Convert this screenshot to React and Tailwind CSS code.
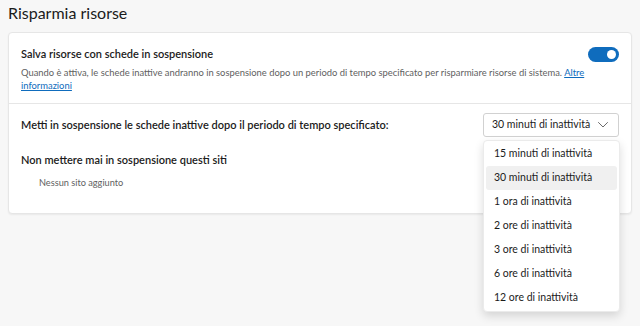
import React from "react";

const options = [
  "15 minuti di inattività",
  "30 minuti di inattività",
  "1 ora di inattività",
  "2 ore di inattività",
  "3 ore di inattività",
  "6 ore di inattività",
  "12 ore di inattività",
];

const Chevron = () => (
  <svg width="10" height="6" viewBox="0 0 10 6" fill="none">
    <path d="M0.5 0.5L5 5L9.5 0.5" stroke="#6b6b6b" strokeWidth="1" strokeLinecap="round" strokeLinejoin="round" />
  </svg>
);

const App = () => {
  const selected = options[1];

  return (
    <div
      className="w-[640px] h-[326px] overflow-hidden bg-[#f7f7f7] text-[#1b1b1b]"
      style={{ fontFamily: '"Segoe UI", Lato, "Noto Sans", sans-serif' }}
    >
      {/* Header */}
      <h1 className="px-2 pt-[3px] h-[32px] text-[16px] leading-[20px]">Risparmia risorse</h1>

      {/* Card */}
      <div className="mx-2 bg-white border border-[#e6e6e6] rounded-[4px] shadow-[0_1px_2px_rgba(0,0,0,0.06)]">
        {/* Suspend tabs */}
        <div className="flex items-start justify-between px-[12px] pt-[13px] pb-[11px] border-b border-[#e6e6e6]">
          <div className="w-[565px]">
            <p className="text-[11px] leading-[16px] font-semibold">Salva risorse con schede in sospensione</p>
            <p className="mt-[4px] text-[9.4px] leading-[13px] text-[#616161]">
              Quando è attiva, le schede inattive andranno in sospensione dopo un periodo di tempo specificato per risparmiare risorse di sistema.{" "}
              <a href="#" className="text-[#0f6cbd] underline underline-offset-1">Altre</a>{" "}
              <a href="#" className="text-[#0f6cbd] underline underline-offset-1">informazioni</a>
            </p>
          </div>
          <div className="mt-[1px] w-[31px] h-[15px] rounded-full bg-[#0f6cbd] flex items-center justify-end pr-[3px]">
            <span className="w-[9px] h-[9px] rounded-full bg-white" />
          </div>
        </div>

        {/* Timeout + exceptions */}
        <div className="px-[12px] pt-[9px] pb-[23px]">
          <div className="flex items-center justify-between">
            <p className="text-[11px] leading-[16px] font-semibold">
              Metti in sospensione le schede inattive dopo il periodo di tempo specificato:
            </p>
            <div className="relative">
              <button className="w-[136px] h-[24px] flex items-center justify-between pl-[8px] pr-[10px] border border-[#d1d1d1] rounded-[3px] bg-white text-[10.5px] whitespace-nowrap">
                <span>{selected}</span>
                <Chevron />
              </button>

              {/* Open list */}
              <ul className="absolute left-0 top-[27px] z-10 w-[137px] py-[1px] px-[2px] bg-white rounded-[4px] border border-[#ebebeb] shadow-[0_4px_10px_rgba(0,0,0,0.14)]">
                {options.map((opt) => (
                  <li
                    key={opt}
                    className={`h-[24px] flex items-center px-[8px] rounded-[3px] text-[10.5px] whitespace-nowrap ${
                      opt === selected ? "bg-[#f0f0f0]" : ""
                    }`}
                  >
                    {opt}
                  </li>
                ))}
              </ul>
            </div>
          </div>

          <p className="mt-[15px] text-[11px] leading-[16px] font-semibold">Non mettere mai in sospensione questi siti</p>
          <p className="mt-[8px] pl-[18px] text-[9.2px] leading-[14px] text-[#616161]">Nessun sito aggiunto</p>
        </div>
      </div>
    </div>
  );
};

export default App;
